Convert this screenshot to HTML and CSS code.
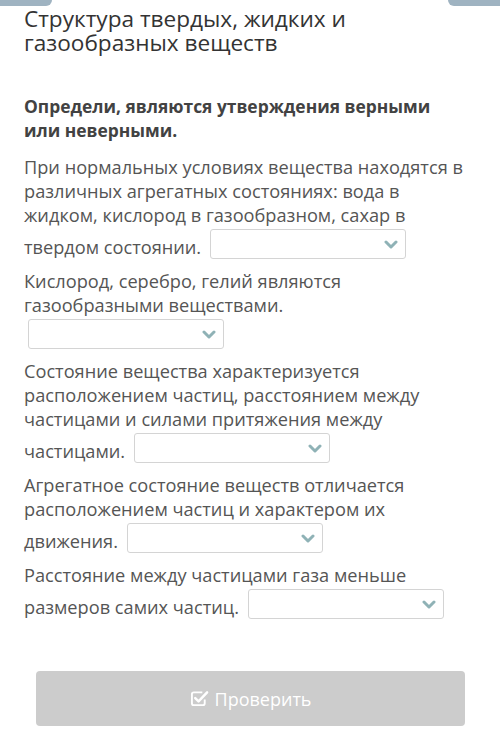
FILE: index.html
```html
<!DOCTYPE html>
<html lang="ru">
<head>
<meta charset="utf-8">
<title>Структура твердых, жидких и газообразных веществ</title>
<link rel="stylesheet" href="styles.css">
</head>
<body>
<div class="topbar">
  <span class="tab tab-left"></span>
  <span class="tab tab-right"></span>
</div>
<main class="content">
  <h1 class="title">Структура твердых, жидких и газообразных веществ</h1>
  <h2 class="task">Определи, являются утверждения верными или неверными.</h2>

  <p class="item">При нормальных условиях вещества находятся в различных агрегатных состояниях: вода в жидком, кислород в газообразном, сахар в твердом состоянии. <span class="select"><svg class="chev" viewBox="0 0 14 9" width="14" height="9"><path d="M2 2 L7 7 L12 2"/></svg></span></p>

  <p class="item">Кислород, серебро, гелий являются газообразными веществами. <span class="select"><svg class="chev" viewBox="0 0 14 9" width="14" height="9"><path d="M2 2 L7 7 L12 2"/></svg></span></p>

  <p class="item">Состояние вещества характеризуется расположением частиц, расстоянием между частицами и силами притяжения между частицами. <span class="select"><svg class="chev" viewBox="0 0 14 9" width="14" height="9"><path d="M2 2 L7 7 L12 2"/></svg></span></p>

  <p class="item">Агрегатное состояние веществ отличается расположением частиц и характером их движения. <span class="select"><svg class="chev" viewBox="0 0 14 9" width="14" height="9"><path d="M2 2 L7 7 L12 2"/></svg></span></p>

  <p class="item">Расстояние между частицами газа меньше размеров самих частиц. <span class="select"><svg class="chev" viewBox="0 0 14 9" width="14" height="9"><path d="M2 2 L7 7 L12 2"/></svg></span></p>

  <button class="check-btn" type="button"><svg class="check-icon" viewBox="0 0 20 20" width="19" height="19"><path class="box" d="M13 3.5 H4 Q2 3.5 2 5.5 V15 Q2 17 4 17 H13.5 Q15.5 17 15.5 15 V11"/><path class="tick" d="M5.5 9.5 L9 13 L18 3.5"/></svg><span>Проверить</span></button>
</main>
</body>
</html>
```
FILE: styles.css
```css
html, body {
  margin: 0;
  padding: 0;
  background: #ffffff;
}

body {
  font-family: "Open Sans", "Noto Sans", "DejaVu Sans", sans-serif;
  color: #555555;
  width: 500px;
  height: 751px;
  overflow: hidden;
}

.topbar {
  display: flex;
  justify-content: space-between;
  height: 6px;
}

.tab {
  display: block;
  width: 52px;
  height: 6px;
  background: #9fb3c1;
}

.tab-left {
  border-bottom-right-radius: 6px;
}

.tab-right {
  border-bottom-left-radius: 6px;
}

.content {
  padding: 1px 33px 0 24px;
}

.title {
  margin: 0;
  font-size: 22.6px;
  font-weight: 400;
  line-height: 24px;
  color: #333333;
}

.task {
  margin: 39px 0 13px 0;
  font-size: 17.4px;
  font-weight: 700;
  line-height: 24px;
  color: #424242;
}

.item {
  margin: 0 0 8px 0;
  font-size: 18.2px;
  line-height: 24px;
  color: #555555;
}

.select {
  display: inline-block;
  overflow: hidden;
  box-sizing: border-box;
  width: 196px;
  height: 30px;
  margin: 2px 0 2px 4px;
  border: 1px solid #d4d4d4;
  border-radius: 3px;
  background: #ffffff;
  vertical-align: -7px;
}

.chev {
  display: block;
  margin: 10px 7px 0 auto;
  fill: none;
  stroke: #8fb2b6;
  stroke-width: 3;
  stroke-linecap: round;
  stroke-linejoin: round;
}

.check-btn {
  display: flex;
  align-items: center;
  justify-content: center;
  gap: 6px;
  box-sizing: border-box;
  width: 429px;
  height: 55px;
  margin: 50px 0 0 12px;
  padding: 0;
  border: none;
  border-radius: 4px;
  background: #cccccc;
  color: #ffffff;
  font-family: "Open Sans", "Noto Sans", sans-serif;
  font-size: 18px;
}

.check-icon {
  display: block;
  fill: none;
  stroke: #ffffff;
}

.check-icon .box {
  stroke-width: 2;
}

.check-icon .tick {
  stroke-width: 2.6;
  stroke-linecap: round;
  stroke-linejoin: round;
}
```
